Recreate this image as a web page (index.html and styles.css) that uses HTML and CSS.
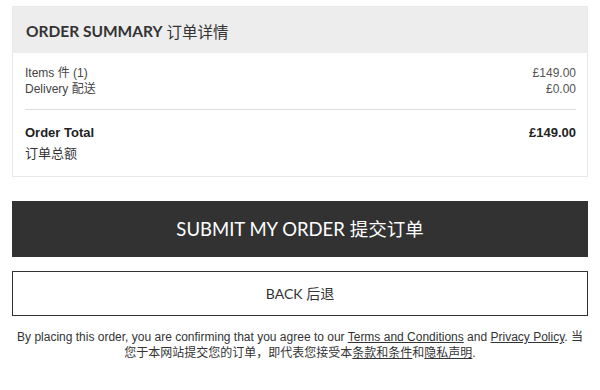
FILE: index.html
```html
<!DOCTYPE html>
<html>
<head>
<meta charset="utf-8">
<link rel="stylesheet" href="styles.css">
</head>
<body>
<div class="page">
  <section class="summary">
    <div class="summary-head">ORDER SUMMARY <span class="cjk">订单详情</span></div>
    <div class="summary-body">
      <div class="lines">
        <div class="line"><span>Items 件 (1)</span><span>£149.00</span></div>
        <div class="line"><span>Delivery 配送</span><span>£0.00</span></div>
      </div>
      <div class="total">
        <div class="total-label">
          <div class="total-en">Order Total</div>
          <div class="total-cn">订单总额</div>
        </div>
        <div class="total-value">£149.00</div>
      </div>
    </div>
  </section>
  <button class="btn-submit">SUBMIT MY ORDER 提交订单</button>
  <button class="btn-back">BACK 后退</button>
  <p class="legal">By placing this order, you are confirming that you agree to our <a>Terms and Conditions</a> and <a>Privacy Policy</a>. 当您于本网站提交您的订单，即代表您接受本<a>条款和条件</a>和<a>隐私声明</a>.</p>
</div>
</body>
</html>
```

FILE: styles.css
```css
* { box-sizing: border-box; }
html, body { margin: 0; padding: 0; background: #fff; }
body {
  font-family: "Liberation Sans", Arial, "Noto Sans CJK SC", sans-serif;
  color: #333;
}
.page {
  width: 576px;
  margin: 6px 12px 0;
  display: flex;
  flex-direction: column;
}
.summary {
  border: 1px solid #e8e8e8;
}
.summary-head {
  background: #ededed;
  height: 46px;
  padding: 0 13px;
  display: flex;
  align-items: center;
  font-family: "Lato", "Noto Sans CJK SC", sans-serif;
  font-weight: 700;
  font-size: 15.5px;
  color: #333;
  padding-top: 1px;
}
.summary-head .cjk {
  font-weight: 400;
  margin-left: 4px;
}
.summary-body {
  padding: 12px 11px 0 12px;
}
.lines {
  font-size: 12px;
  line-height: 16px;
  padding-bottom: 12px;
  border-bottom: 1px solid #dedede;
  color: #444;
}
.line {
  display: flex;
  justify-content: space-between;
}
.line span:last-child { color: #555; }
.total {
  display: flex;
  justify-content: space-between;
  padding: 15px 0 13px;
}
.total-en {
  font-weight: 700;
  font-size: 13px;
  line-height: 16px;
  color: #222;
}
.total-cn {
  font-size: 13px;
  line-height: 18px;
  margin-top: 4px;
}
.total-value {
  font-weight: 700;
  font-size: 13px;
  line-height: 16px;
  color: #222;
}
.btn-submit {
  margin-top: 24px;
  height: 56px;
  border: 0;
  background: #333232;
  color: #fff;
  font-family: "Lato", "Noto Sans CJK SC", sans-serif;
  font-size: 18.5px;
  font-weight: 400;
  padding: 0 0 3px;
  cursor: pointer;
}
.btn-back {
  margin-top: 14px;
  height: 45px;
  border: 1px solid #333;
  background: #fff;
  color: #333;
  font-family: "Lato", "Noto Sans CJK SC", sans-serif;
  font-size: 14px;
  padding: 0 0 2px;
  cursor: pointer;
}
.legal {
  margin: 13px 0 0;
  text-align: center;
  font-size: 12px;
  line-height: 16px;
  color: #333;
}
.legal a {
  text-decoration: underline;
  color: #333;
}
```
